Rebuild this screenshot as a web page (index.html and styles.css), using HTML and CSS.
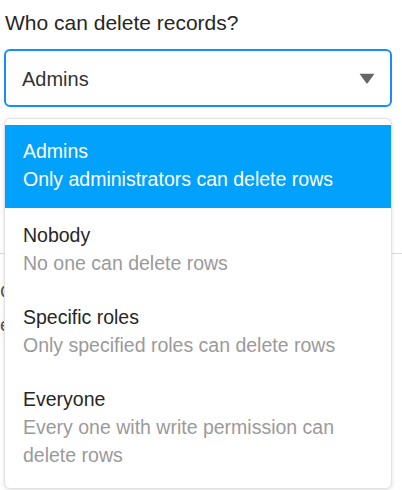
FILE: index.html
```html
<!DOCTYPE html>
<html>
<head>
<meta charset="utf-8">
<link rel="stylesheet" href="styles.css">
</head>
<body>
<div class="page">
  <div class="field">
    <div class="label">Who can delete records?</div>
    <div class="select">
      <span class="select-value">Admins</span>
      <svg class="caret" width="16" height="11" viewBox="0 0 16 11"><path d="M0.5 0.8 L15.5 0.8 L8.6 10.2 Q8 11 7.4 10.2 Z" fill="#666"/></svg>
    </div>
  </div>
  <div class="behind">
    <div class="behind-line">C</div>
    <div class="behind-line">e</div>
  </div>
  <ul class="menu">
    <li class="item selected">
      <div class="item-title">Admins</div>
      <div class="item-desc">Only administrators can delete rows</div>
    </li>
    <li class="item">
      <div class="item-title">Nobody</div>
      <div class="item-desc">No one can delete rows</div>
    </li>
    <li class="item">
      <div class="item-title">Specific roles</div>
      <div class="item-desc">Only specified roles can delete rows</div>
    </li>
    <li class="item">
      <div class="item-title">Everyone</div>
      <div class="item-desc">Every one with write permission can delete rows</div>
    </li>
  </ul>
</div>
</body>
</html>
```

FILE: styles.css
```css
html, body {
  margin: 0;
  padding: 0;
  background: #ffffff;
}
body {
  font-family: "Liberation Sans", Arial, sans-serif;
  color: #222;
  width: 402px;
  height: 490px;
  overflow: hidden;
}
.page {
  position: relative;
  height: 490px;
}
.field {
  padding: 11px 10px 0 4px;
}
.label {
  font-size: 21px;
  line-height: 24px;
  color: #262626;
  padding-left: 1px;
  margin-bottom: 14px;
}
.select {
  box-sizing: border-box;
  height: 58px;
  border: 2px solid #168dff;
  border-radius: 6px;
  display: flex;
  align-items: center;
  justify-content: space-between;
  padding: 0 15px 0 16px;
  background: #fff;
}
.select-value {
  font-size: 20px;
  color: #333;
  padding-top: 2px;
}
.caret {
  display: block;
  margin-top: 1px;
}
.behind {
  margin-top: 146px;
  border-top: 1px solid #dcdcdc;
  padding-top: 21px;
}
.behind-line {
  font-size: 19px;
  line-height: 33px;
  color: #555;
}
.menu {
  position: absolute;
  top: 118px;
  left: 4px;
  width: 388px;
  height: 371px;
  box-sizing: border-box;
  margin: 0;
  padding: 6px 0 6px;
  list-style: none;
  background: #fff;
  border: 1px solid #e2e2e2;
  border-radius: 6px;
  box-shadow: 0 1px 4px rgba(0, 0, 0, 0.12);
  overflow: hidden;
}
.item {
  padding: 13px 40px 13px 18px;
  font-size: 19.5px;
  line-height: 28px;
}
.item.selected {
  background: #02a1fc;
  padding-top: 12px;
  padding-bottom: 15px;
}
.item-title {
  color: #262626;
}
.item-desc {
  color: #9a9a9a;
}
.item.selected .item-title,
.item.selected .item-desc {
  color: #ffffff;
}
```
